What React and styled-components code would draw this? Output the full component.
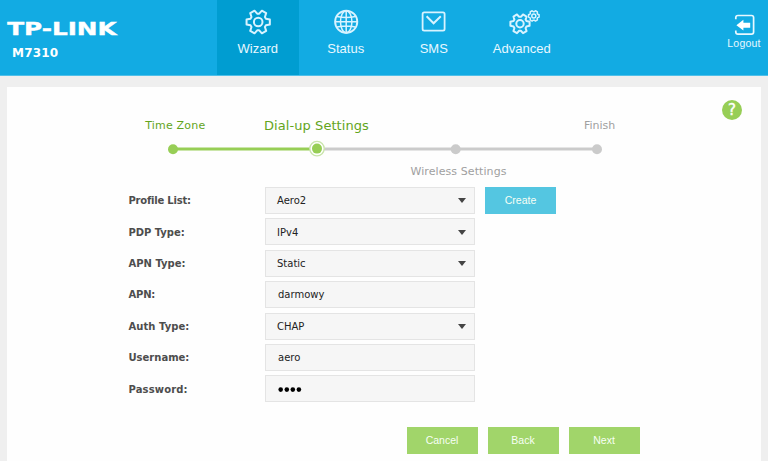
import React from 'react';
import styled, { createGlobalStyle } from 'styled-components';

const GlobalStyle = createGlobalStyle`
  * { box-sizing: border-box; }
  html, body { margin: 0; height: 461px; overflow: hidden; background: #efefef; }
  body { font-family: "DejaVu Sans", Verdana, sans-serif; }
  button { font: inherit; border: 0; padding: 0; margin: 0; outline: 0; }
`;

const Page = styled.div`
  width: 768px;
  height: 461px;
  overflow: hidden;
`;

const Header = styled.header`
  display: flex;
  height: 76px;
  background: #12abe3;
  border-bottom: 1px solid #50c0e9;
  color: #fff;
`;

const Brand = styled.div`
  width: 217px;
  padding: 18px 0 0 7px;
  svg { display: block; overflow: visible; }
`;

const Model = styled.div`
  margin: 5px 0 0 5px;
  font-size: 12px;
  line-height: 16px;
  font-weight: bold;
  letter-spacing: 0.2px;
`;

const Nav = styled.nav`
  display: flex;
  gap: 6.5px;
`;

const Tab = styled.a`
  display: flex;
  flex-direction: column;
  align-items: center;
  width: 81.5px;
  height: 75px;
  padding-top: 8px;
  background: ${p => (p.$active ? '#009dd1' : 'transparent')};
  color: #e8f8ff;
  font: 13px/16px "Liberation Sans", Arial, sans-serif;
  svg { display: block; margin-bottom: 5px; }
`;

const Logout = styled.a`
  display: flex;
  flex-direction: column;
  align-items: center;
  width: 40px;
  margin-left: auto;
  margin-right: 4px;
  padding-top: 14px;
  color: #e8f8ff;
  font: 10.5px/14px "Liberation Sans", Arial, sans-serif;
  letter-spacing: 0.2px;
  svg { display: block; margin: 0 0 0 2px; }
`;

const Panel = styled.main`
  display: flex;
  flex-direction: column;
  width: 754px;
  height: 374px;
  margin: 11px 0 0 7px;
  background: #fefefe;
  position: relative;
`;

const Help = styled.button`
  position: absolute;
  left: 715px;
  top: 12.5px;
  width: 20px;
  height: 20px;
  border-radius: 50%;
  background: #97ce56;
  color: #fff;
  font-size: 15px;
  line-height: 20px;
  text-align: center;
  -webkit-text-stroke: 0.4px #fff;
`;

const Steps = styled.section`
  width: 520px;
  height: 100px;
  margin-left: 120px;
  padding-top: 29px;
`;

const StepLabels = styled.div`
  display: flex;
  height: 19px;
  line-height: 19px;
  white-space: nowrap;
  margin-top: ${p => p.$top || 0}px;
`;

const StepLabel = styled.span`
  margin-left: ${p => p.$gap}px;
  width: ${p => p.$width}px;
  font-size: ${p => p.$size || 11}px;
  letter-spacing: ${p => p.$spacing || 0}px;
  color: ${p => (p.$done ? '#63a51c' : '#a0a0a0')};
`;

const Track = styled.svg`
  display: block;
  margin: 5px 0 0 38px;
`;

const Form = styled.form`
  display: flex;
  flex-direction: column;
  gap: 4.4px;
  margin-left: 121.5px;
`;

const Row = styled.div`
  display: flex;
  align-items: center;
  height: 27px;
`;

const Label = styled.label`
  width: 136.5px;
  padding-top: 0.6px;
  font-size: 10px;
  font-weight: bold;
  letter-spacing: ${p => p.$spacing || 0}px;
  color: #4d4d4d;
`;

const Field = styled.div`
  display: flex;
  align-items: center;
  justify-content: space-between;
  width: 210px;
  height: 27px;
  padding: 0.6px 8px 0 ${p => (p.$text ? 12 : 11)}px;
  border: 1px solid #e4e4e4;
  background: #f6f6f6;
  color: #222;
  font-size: 10px;
`;

const Button = styled.button`
  width: 71px;
  height: 27px;
  background: ${p => (p.$blue ? '#54c6e1' : '#a1d56a')};
  color: #f7fff5;
  font: 10.5px/27px "Liberation Sans", Arial, sans-serif;
  margin-left: ${p => (p.$blue ? 10 : 0)}px;
`;

const Actions = styled.div`
  display: flex;
  gap: 10px;
  margin: 24.7px 0 0 399.5px;
`;

const Arrow = () => (
  <svg width="8" height="5" viewBox="0 0 8 5"><path d="M0 0H8L4 5Z" fill="#444" /></svg>
);

// Outline of a six-toothed gear centred on (cx, cy).
function gearPath(cx, cy, outer, inner) {
  const pts = [];
  for (let i = 0; i < 6; i++) {
    const c = i * 60;
    [[-23, inner], [-12, outer], [12, outer], [23, inner]].forEach(([a, r]) => {
      const t = ((c + a) * Math.PI) / 180;
      pts.push(`${(cx + r * Math.cos(t)).toFixed(2)} ${(cy + r * Math.sin(t)).toFixed(2)}`);
    });
  }
  return `M${pts.join('L')}Z`;
}

const Gear = ({ cx, cy, outer, inner, hub, width }) => (
  <g fill="none" stroke="#d8f3ff" strokeWidth={width} strokeLinejoin="round">
    <path d={gearPath(cx, cy, outer, inner)} />
    <circle cx={cx} cy={cy} r={hub} />
  </g>
);

const WizardIcon = () => (
  <svg width="30" height="28" viewBox="0 0 30 28">
    <Gear cx={15.2} cy={14} outer={11.9} inner={8.4} hub={4.3} width={2} />
  </svg>
);

const GlobeIcon = () => (
  <svg width="30" height="28" viewBox="0 0 30 28" fill="none" stroke="#d8f3ff" strokeWidth="1.5">
    <circle cx="15.2" cy="13.8" r="11.1" strokeWidth="1.9" />
    <ellipse cx="15.2" cy="13.8" rx="5.7" ry="11.1" />
    <path d="M15.2 2.6V25M4 13.8H26.4M6 8.6Q15.2 10.4 24.4 8.6M6 19Q15.2 17.2 24.4 19" />
  </svg>
);

const MailIcon = () => (
  <svg width="30" height="28" viewBox="0 0 30 28" fill="none" stroke="#d8f3ff">
    <rect x="3.6" y="4.3" width="22" height="18.4" rx="1.6" strokeWidth="1.8" />
    <path d="M7.6 8.3L14.6 15.3L21.8 8.3" strokeWidth="2" />
  </svg>
);

const AdvancedIcon = () => (
  <svg width="36" height="28" viewBox="0 0 36 28">
    <Gear cx={16} cy={15.8} outer={9.8} inner={7} hub={3.7} width={2} />
    <Gear cx={29.8} cy={7.9} outer={5.4} inner={4.3} hub={2} width={1.5} />
  </svg>
);

const LogoutIcon = () => (
  <svg width="22" height="22" viewBox="0 0 22 22">
    <path d="M1.8 5.2V3.6Q1.8 1.5 3.9 1.5H17.5Q19.6 1.5 19.6 3.6V18Q19.6 20.2 17.5 20.2H3.9Q1.8 20.2 1.8 18V16.4" fill="none" stroke="#e8f8ff" strokeWidth="1.7" />
    <path d="M2.4 11.2L9.4 5.8V8.7H16.2V13.7H9.4V16.6Z" fill="#fff" />
  </svg>
);

const Logo = () => (
  <svg width="112" height="22" viewBox="0 0 112 22">
    <text x="0.2" y="17" textLength="109.5" lengthAdjust="spacingAndGlyphs" fill="#fff" stroke="#fff" strokeWidth="0.4" fontFamily="DejaVu Sans" fontWeight="bold" fontSize="18.4">TP-LINK</text>
  </svg>
);

const rows = [
  { label: 'Profile List:', value: 'Aero2', spacing: -0.22, select: true, create: true },
  { label: 'PDP Type:', value: 'IPv4', spacing: -0.05, select: true },
  { label: 'APN Type:', value: 'Static', select: true },
  { label: 'APN:', value: 'darmowy', spacing: -0.2 },
  { label: 'Auth Type:', value: 'CHAP', spacing: 0.05, select: true },
  { label: 'Username:', value: 'aero' },
  { label: 'Password:', secret: true, spacing: 0.15 },
];

const PasswordDots = () => (
  <svg width="24" height="6" viewBox="0 0 24 6">
    {[2.7, 8.8, 14.8, 20.9].map(x => <circle key={x} cx={x} cy="3.6" r="2.3" fill="#000" />)}
  </svg>
);

export default function App() {
  return (
    <Page>
      <GlobalStyle />
      <Header>
        <Brand><Logo /><Model>M7310</Model></Brand>
        <Nav>
          <Tab $active><WizardIcon />Wizard</Tab>
          <Tab><GlobeIcon />Status</Tab>
          <Tab><MailIcon />SMS</Tab>
          <Tab><AdvancedIcon />Advanced</Tab>
        </Nav>
        <Logout><LogoutIcon />Logout</Logout>
      </Header>
      <Panel>
        <Help>?</Help>
        <Steps>
          <StepLabels>
            <StepLabel $done $gap={18.3} $width={118.7} $spacing={0.18}>Time Zone</StepLabel>
            <StepLabel $done $gap={0} $width={320} $size={13} $spacing={0.07}>Dial-up Settings</StepLabel>
            <StepLabel $gap={0} $width={40}>Finish</StepLabel>
          </StepLabels>
          <Track width="450" height="18" viewBox="0 0 450 18">
            <path d="M8 9H152" stroke="#97ce56" strokeWidth="3" />
            <path d="M152 9H432" stroke="#cbcbcb" strokeWidth="3" />
            <circle cx="8" cy="9.2" r="5" fill="#97ce56" />
            <circle cx="152" cy="8.6" r="7.2" fill="#fff" stroke="#c9e4ab" strokeWidth="1.3" />
            <circle cx="152" cy="8.6" r="5" fill="#97ce56" />
            <circle cx="290.7" cy="9.2" r="5" fill="#cbcbcb" />
            <circle cx="432" cy="9.2" r="5" fill="#cbcbcb" />
          </Track>
          <StepLabels $top={4}>
            <StepLabel $gap={283.5} $width={110} $spacing={0.08}>Wireless Settings</StepLabel>
          </StepLabels>
        </Steps>
        <Form>
          {rows.map(r => (
            <Row key={r.label}>
              <Label $spacing={r.spacing}>{r.label}</Label>
              <Field $text={!r.select}>
                {r.secret ? <PasswordDots /> : <span>{r.value}</span>}
                {r.select && <Arrow />}
              </Field>
              {r.create && <Button type="button" $blue>Create</Button>}
            </Row>
          ))}
        </Form>
        <Actions>
          <Button>Cancel</Button>
          <Button>Back</Button>
          <Button>Next</Button>
        </Actions>
      </Panel>
    </Page>
  );
}
